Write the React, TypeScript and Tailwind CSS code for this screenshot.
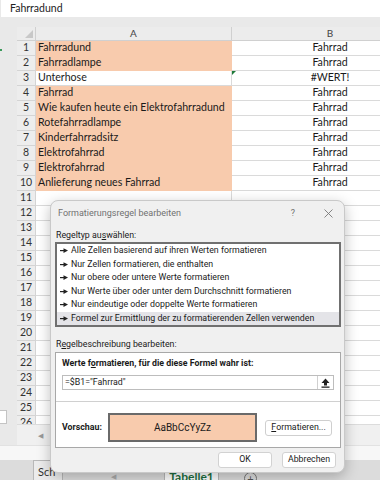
const rows = [
  { a: 'Fahrradund', b: 'Fahrrad', fill: true },
  { a: 'Fahrradlampe', b: 'Fahrrad', fill: true },
  { a: 'Unterhose', b: '#WERT!', fill: false, err: true },
  { a: 'Fahrrad', b: 'Fahrrad', fill: true },
  { a: 'Wie kaufen heute ein Elektrofahrradund', b: 'Fahrrad', fill: true },
  { a: 'Rotefahrradlampe', b: 'Fahrrad', fill: true },
  { a: 'Kinderfahrradsitz', b: 'Fahrrad', fill: true },
  { a: 'Elektrofahrrad', b: 'Fahrrad', fill: true },
  { a: 'Elektrofahrrad', b: 'Fahrrad', fill: true },
  { a: 'Anlieferung neues Fahrrad', b: 'Fahrrad', fill: true },
];

const ruleTypes = [
  'Alle Zellen basierend auf ihren Werten formatieren',
  'Nur Zellen formatieren, die enthalten',
  'Nur obere oder untere Werte formatieren',
  'Nur Werte über oder unter dem Durchschnitt formatieren',
  'Nur eindeutige oder doppelte Werte formatieren',
  'Formel zur Ermittlung der zu formatierenden Zellen verwenden',
];

const sheetFont = { fontFamily: 'Lato, "Liberation Sans", sans-serif' };
const uiFont = { fontFamily: 'Roboto, "Liberation Sans", sans-serif' };

const RuleArrow = () => (
  <svg width="8" height="5" viewBox="0 0 8 5" className="shrink-0">
    <rect x="0" y="2" width="4" height="1.2" fill="#222" />
    <polygon points="3.5,0.3 8,2.6 3.5,4.9" fill="#222" />
  </svg>
);

const UploadIcon = () => (
  <svg width="9" height="10" viewBox="0 0 9 10">
    <polygon points="4.5,0.5 8.5,5 6,5 6,7.5 3,7.5 3,5 0.5,5" fill="#222" />
    <rect x="0.5" y="8.5" width="8" height="1.3" fill="#222" />
  </svg>
);

function Sheet() {
  const empty = Array.from({ length: 16 }, (_, i) => i + 11);
  return (
    <div className="flex flex-col w-[380px] h-[480px] overflow-hidden bg-[#e9e9e9]" style={sheetFont}>
      {/* formula bar */}
      <div className="h-[17px] ml-[1px] bg-white flex items-center pl-[9px] text-[10.5px] text-[#222]">Fahrradund</div>
      <div className="h-[10px]" />
      {/* grid */}
      <div className="flex h-[397px]">
        <div className="w-[17px] shrink-0 flex flex-col justify-between">
          <div className="mt-[22px] w-[2px] h-[2px] bg-[#3a9a5a]" />
          <div className="w-[7px] h-[14px] bg-white border border-l-0 border-[#c4c4c4]" />
        </div>
        <div className="flex flex-col overflow-hidden">
          <div className="flex h-[14px] bg-[#ececec] border-b border-[#d0d0d0] text-[10px] text-[#444]">
            <div className="w-[19px] shrink-0 border-r border-[#d0d0d0] relative">
              <div className="absolute right-[2px] bottom-[2px] w-0 h-0 border-l-[8px] border-l-transparent border-b-[8px] border-b-[#c8c8c8]" />
            </div>
            <div className="w-[196px] shrink-0 border-r border-[#d0d0d0] flex items-center justify-center">A</div>
            <div className="w-[196px] shrink-0 flex items-center justify-center">B</div>
          </div>
          {rows.map((r, i) => (
            <div key={i} className="flex h-[15px] text-[10.6px] text-[#1a1a1a]">
              <div className="w-[19px] shrink-0 bg-[#ededed] border-r border-b border-[#d4d4d4] flex items-center justify-center text-[10.5px] text-[#333]">{i + 1}</div>
              <div className={`w-[196px] shrink-0 border-b flex items-center pl-[2px] whitespace-nowrap ${r.fill ? 'bg-[#f8cbad] border-[#f8cbad]' : 'bg-white border-[#dadada] border-r'}`}>{r.a}</div>
              <div className="w-[196px] shrink-0 bg-white border-b border-[#dadada] flex items-center justify-center relative">
                {r.err && <div className="absolute left-0 top-0 w-0 h-0 border-t-[4px] border-t-[#1f7a3a] border-r-[4px] border-r-transparent" />}
                {r.b}
              </div>
            </div>
          ))}
          {empty.map((n) => (
            <div key={n} className="flex h-[15px] text-[11px]">
              <div className="w-[19px] shrink-0 bg-[#ededed] border-r border-b border-[#d4d4d4] flex items-center justify-center text-[10.5px] text-[#333]">{n}</div>
              <div className="w-[196px] shrink-0 bg-white border-b border-r border-[#dadada]" />
              <div className="w-[196px] shrink-0 bg-white border-b border-[#dadada]" />
            </div>
          ))}
        </div>
      </div>
      {/* scroll bar */}
      <div className="h-[21px] flex">
        <div className="w-[17px]" />
        <div className="flex-1 bg-[#f0f0f0] border-t border-[#dcdcdc] flex items-center pl-[21px] text-[7px] text-[#999]">◀</div>
      </div>
      <div className="h-[15px] bg-[#f7f7f7] border-t border-[#e2e2e2]" />
      {/* sheet tabs */}
      <div className="h-[20px] bg-[#dcdcdc] flex items-start text-[11px]">
        <div className="ml-[33px] w-[30px] h-[22px] bg-[#ececec] border border-[#b8b8b8] pl-[4px] pt-[3px] text-[#333]">Sch</div>
        <div className="ml-[48px] flex gap-[6px] text-[7px] text-[#aaa] pt-[11px]"><span>◀</span></div>
        <div className="ml-[48px] w-[55px] h-[20px] bg-white border-x border-[#b8b8b8] flex justify-center pt-[10px] font-bold text-[#1d6f3f] text-[12px] leading-[14px]">Tabelle1</div>
        <div className="ml-[25px] mt-[12px] w-[13px] h-[13px] rounded-full border border-[#777] flex items-center justify-center text-[11px] leading-none text-[#555]">+</div>
      </div>
    </div>
  );
}

function Dialog() {
  return (
    <div className="absolute left-[50px] top-[200px] w-[295px] h-[273px] bg-[#f0f0f0] border border-[#c9c9c9] rounded-[8px] shadow-[0_4px_14px_rgba(0,0,0,0.25)] flex flex-col text-[8.8px] text-[#1a1a1a] whitespace-nowrap" style={uiFont}>
      <div className="h-[25px] flex items-center pl-[7px] pr-[9px] text-[#707070] text-[9px]">
        <span>Formatierungsregel bearbeiten</span>
        <span className="ml-auto w-[14px] text-center">?</span>
        <span className="ml-[21px] w-[14px] flex justify-center">
          <svg width="9" height="9" viewBox="0 0 9 9"><path d="M0.5 0.5 L8.5 8.5 M8.5 0.5 L0.5 8.5" stroke="#777" strokeWidth="0.9" /></svg>
        </span>
      </div>
      <div className="mt-[4px] h-[12px] pl-[5px] flex items-center">Regeltyp au<span className="underline">s</span>wählen:</div>
      <div className="ml-[4px] w-[286px] h-[85px] bg-white border-2 border-[#707070] flex flex-col">
        {ruleTypes.map((t, i) => (
          <div key={i} className={`h-[13.5px] flex items-center gap-[3px] pl-[3px] ${i === 5 ? 'bg-[#e4e4e8]' : ''}`}>
            <RuleArrow />
            <span>{t}</span>
          </div>
        ))}
      </div>
      <div className="mt-[12px] h-[12px] pl-[5px] flex items-center">R<span className="underline">e</span>gelbeschreibung bearbeiten:</div>
      <div className="mt-[1px] ml-[4px] w-[286px] h-[96px] bg-white border border-[#a8a8a8] flex flex-col">
        <div className="px-[6px] pt-[5px]">
          <div className="h-[12px] flex items-center font-bold">Werte f<span className="underline">o</span>rmatieren, für die diese Formel wahr ist:</div>
          <div className="mt-[5px] h-[15px] border border-[#bdbdbd] flex items-center">
            <span className="pl-[2px] flex-1">=$B1="Fahrrad"</span>
            <span className="w-[16px] h-full border-l border-[#d0d0d0] flex items-center justify-center"><UploadIcon /></span>
          </div>
        </div>
        <div className="mt-[11px] border-t border-[#d0d0d0] flex items-center px-[6px] pt-[11px]">
          <div className="w-[46px] font-bold">Vorschau:</div>
          <div className="w-[149px] h-[29px] bg-[#f8cbad] border-2 border-[#6a6a6a] flex items-center justify-center text-[10px]">AaBbCcYyZz</div>
          <div className="ml-[8px] w-[67px] h-[16px] bg-white border border-[#cfcfcf] rounded-[3px] flex items-center justify-center">
            <span className="underline">F</span>ormatieren...
          </div>
        </div>
      </div>
      <div className="mt-[4px] flex justify-end gap-[10px] pr-[8px]">
        <div className="w-[54px] h-[16px] bg-white border border-[#d2d2d2] rounded-[3px] flex items-center justify-center">OK</div>
        <div className="w-[54px] h-[16px] bg-white border border-[#d2d2d2] rounded-[3px] flex items-center justify-center">Abbrechen</div>
      </div>
    </div>
  );
}

export default function App() {
  return (
    <div className="relative w-[380px] h-[480px] overflow-hidden">
      <Sheet />
      <Dialog />
    </div>
  );
}
